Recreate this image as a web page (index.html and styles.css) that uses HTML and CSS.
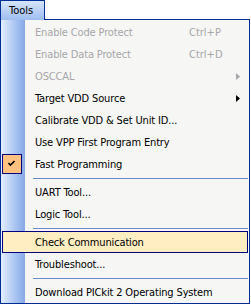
FILE: index.html
```html
<!DOCTYPE html>
<html lang="en">
<head>
    <meta charset="UTF-8">
    <title>Tools menu</title>
    <link rel="stylesheet" href="styles.css">
</head>
<body>
    <div class="menubar">
        <div class="tab">Tools</div>
    </div>

    <div class="menu">
        <div class="item disabled">
            <span class="icon"></span>
            <span class="label">Enable Code Protect</span>
            <span class="key">Ctrl+P</span>
            <span class="arrow"></span>
        </div>
        <div class="item disabled">
            <span class="icon"></span>
            <span class="label">Enable Data Protect</span>
            <span class="key">Ctrl+D</span>
            <span class="arrow"></span>
        </div>
        <div class="item disabled">
            <span class="icon"></span>
            <span class="label">OSCCAL</span>
            <span class="arrow"><svg width="4" height="7" viewBox="0 0 4 7"><polygon points="0,0 4,3.5 0,7" /></svg></span>
        </div>
        <div class="item">
            <span class="icon"></span>
            <span class="label">Target VDD Source</span>
            <span class="arrow"><svg width="4" height="7" viewBox="0 0 4 7"><polygon points="0,0 4,3.5 0,7" /></svg></span>
        </div>
        <div class="item">
            <span class="icon"></span>
            <span class="label">Calibrate VDD &amp; Set Unit ID...</span>
            <span class="arrow"></span>
        </div>
        <div class="item">
            <span class="icon"></span>
            <span class="label">Use VPP First Program Entry</span>
            <span class="arrow"></span>
        </div>
        <div class="item checked">
            <span class="icon">
                <svg width="20" height="20" viewBox="0 0 20 20"><path d="M6.5 9 L8.5 11 L12.5 7" /></svg>
            </span>
            <span class="label">Fast Programming</span>
            <span class="arrow"></span>
        </div>

        <div class="separator"></div>

        <div class="item">
            <span class="icon"></span>
            <span class="label">UART Tool...</span>
            <span class="arrow"></span>
        </div>
        <div class="item">
            <span class="icon"></span>
            <span class="label">Logic Tool...</span>
            <span class="arrow"></span>
        </div>

        <div class="separator"></div>

        <div class="item active">
            <span class="icon"></span>
            <span class="label">Check Communication</span>
            <span class="arrow"></span>
        </div>
        <div class="item">
            <span class="icon"></span>
            <span class="label">Troubleshoot...</span>
            <span class="arrow"></span>
        </div>

        <div class="separator"></div>

        <div class="item">
            <span class="icon"></span>
            <span class="label">Download PICkit 2 Operating System</span>
            <span class="arrow"></span>
        </div>
    </div>
</body>
</html>
```

FILE: styles.css
```css
body {
    margin: 0;
    background: #fff;
    font-family: Tahoma, 'DejaVu Sans Condensed', 'Liberation Sans', sans-serif;
    font-size: 11px;
    color: #000;
}
.menubar {
    display: flex;
}
.tab {
    position: relative;
    z-index: 1;
    box-sizing: border-box;
    width: 45px;
    height: 20px;
    margin-bottom: -1px;
    padding: 3px 0 0 8px;
    border: 1px solid #002d96;
    border-bottom: none;
    background: linear-gradient(to bottom, #d6e5fb, #9ebdf0);
}
.menu {
    box-sizing: border-box;
    width: 250px;
    padding: 1px 1px 0 1px;
    border: 1px solid #002d96;
    background: linear-gradient(to right, #e3efff, #a9c4f2 60%, #87a8e6) no-repeat 0 0 / 24px 100%, #f6f6f4;
}
.item {
    display: flex;
    align-items: center;
    box-sizing: border-box;
    height: 22px;
    border: 1px solid transparent;
}
.item .icon {
    box-sizing: border-box;
    width: 20px;
    height: 20px;
    margin: 0 13px 0 -1px;
    border: 1px solid transparent;
}
.item .label {
    flex: 1;
    white-space: nowrap;
    letter-spacing: -0.15px;
}
.item .key {
    width: 47px;
}
.item .arrow {
    display: flex;
    align-items: center;
    width: 11px;
    height: 7px;
}
.item .arrow svg {
    fill: #000;
}
.item.disabled {
    color: #a7a6aa;
}
.item.disabled .arrow svg {
    fill: #a7a6aa;
}
.item.checked .icon {
    border-color: #000080;
    background: #ffc080;
}
.item.checked .icon svg {
    display: block;
    margin: -1px;
    fill: none;
    stroke: #000;
    stroke-width: 1.6;
}
.item.active {
    border-color: #000080;
    background: #ffeec2;
}
.separator {
    height: 6px;
    margin-left: 31px;
    display: flex;
    align-items: center;
}
.separator::before {
    content: '';
    flex: 1;
    height: 1px;
    background: #6a8ccb;
}
```
